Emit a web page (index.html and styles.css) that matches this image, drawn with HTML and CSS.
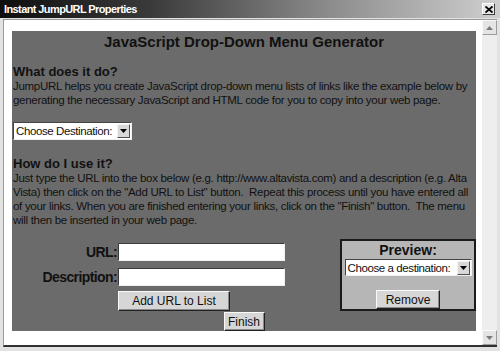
FILE: index.html
```html
<!DOCTYPE html>
<html>
<head>
<meta charset="utf-8">
<link rel="stylesheet" href="styles.css">
</head>
<body>
<div class="window">
  <div class="titlebar">
    <span class="title">Instant JumpURL Properties</span>
    <span class="close"><svg width="8" height="7" viewBox="0 0 8 7"><path d="M0.5 0.5 L7.5 6.5 M7.5 0.5 L0.5 6.5" stroke="#000" stroke-width="1.8"/></svg></span>
  </div>
  <div class="frame">
    <div class="client">
      <div class="panel">
        <h1 class="heading">JavaScript Drop-Down Menu Generator</h1>
        <h2 class="subhead">What does it do?</h2>
        <p class="text">JumpURL helps you create JavaScript drop-down menu lists of links like the example below by<br>generating the necessary JavaScript and HTML code for you to copy into your web page.</p>
        <div class="select demo-select"><span class="select-label">Choose Destination:</span><span class="select-btn"><svg width="7" height="4" viewBox="0 0 7 4"><path d="M0 0 H7 L3.5 4 Z" fill="#000"/></svg></span></div>
        <h2 class="subhead second">How do I use it?</h2>
        <p class="text">Just type the URL into the box below (e.g. http://www.altavista.com) and a description (e.g. Alta<br>Vista) then click on the "Add URL to List" button.&nbsp; Repeat this process until you have entered all<br>of your links. When you are finished entering your links, click on the "Finish" button.&nbsp; The menu<br>will then be inserted in your web page.</p>
        <div class="form-area">
          <div class="fields">
            <span class="field-label">URL:</span><span class="textbox"></span>
            <span class="field-label">Description:</span><span class="textbox"></span>
            <span></span><span class="button add-btn">Add URL to List</span>
          </div>
          <div class="preview">
            <div class="preview-title">Preview:</div>
            <div class="select preview-select"><span class="select-label">Choose a destination:</span><span class="select-btn"><svg width="7" height="4" viewBox="0 0 7 4"><path d="M0 0 H7 L3.5 4 Z" fill="#000"/></svg></span></div>
            <span class="button remove-btn">Remove</span>
          </div>
        </div>
        <div class="finish-row"><span class="button finish-btn">Finish</span></div>
      </div>
    </div>
    <div class="scrollbar">
      <span class="scroll-btn"><svg width="7" height="4" viewBox="0 0 7 4"><path d="M0 4 H7 L3.5 0 Z" fill="#7a7a7a"/></svg></span>
      <span class="scroll-track"></span>
      <span class="scroll-btn"><svg width="7" height="4" viewBox="0 0 7 4"><path d="M0 0 H7 L3.5 4 Z" fill="#7a7a7a"/></svg></span>
    </div>
  </div>
</div>
</body>
</html>
```
FILE: styles.css
```css
html, body { margin: 0; padding: 0; }
body { width: 500px; height: 351px; overflow: hidden; background: #e4e4e4; font-family: "Liberation Sans", Arial, sans-serif; }

.window { width: 500px; height: 351px; display: flex; flex-direction: column; background: #e2e2e2; overflow: hidden; }

.titlebar {
  height: 18px; flex: none;
  display: flex; align-items: center; justify-content: space-between;
  padding: 0 4px 0 4px; box-sizing: border-box;
  background: linear-gradient(to right, #0e0e0e 0%, #3a3a3a 30%, #8a8a8a 65%, #cfcfcf 100%);
}
.title { color: #fff; font-weight: bold; font-size: 11px; font-family: "Liberation Sans", Tahoma, sans-serif; letter-spacing: -0.6px; }
.close {
  width: 13px; height: 12px; box-sizing: border-box;
  display: flex; align-items: center; justify-content: center;
  background: #e6e6e6; border: 1px solid; border-color: #fff #404040 #404040 #fff;
  margin-right: 1px;
}

.frame {
  flex: 1; display: flex; min-height: 0;
  margin: 1px 3px 4px 3px;
  border-top: 1px solid #9a9a9a; border-left: 1px solid #9a9a9a;
  border-bottom: 2px solid #303030;
  background: #fff;
}
.client { flex: 1; min-width: 0; overflow: hidden; padding: 11px 6px 0 8px; }
.scrollbar { width: 15px; flex: none; display: flex; flex-direction: column; background: #eeeeee; }
.scroll-btn {
  height: 15px; box-sizing: border-box; display: flex; align-items: center; justify-content: center;
  background: #e4e4e4; border: 1px solid; border-color: #fafafa #9c9c9c #9c9c9c #fafafa;
}
.scroll-track { flex: 1; }

.panel {
  background: #6b6b6b; height: 300px; box-sizing: border-box;
  padding: 2px 0 0 1px; color: #111;
}
.heading { margin: 0; text-align: center; font-size: 15px; line-height: 18px; font-weight: bold; padding-right: 1px; }
.subhead { margin: 13px 0 0; font-size: 13px; line-height: 15px; font-weight: bold; }
.subhead.second { margin-top: 16px; }
.text { margin: 0; font-size: 11.5px; line-height: 14px; white-space: nowrap; letter-spacing: -0.3px; }

.select {
  display: flex; align-items: center; box-sizing: border-box; background: #fff;
  border: 1px solid; border-color: #444 #f0f0f0 #f0f0f0 #444;
  font-size: 11.5px;
}
.select-label { flex: 1; padding-left: 2px; white-space: nowrap; overflow: hidden; letter-spacing: -0.4px; }
.select-btn {
  width: 13px; height: 14px; box-sizing: border-box; margin-right: 1px; flex: none;
  display: flex; align-items: center; justify-content: center;
  background: #d8d8d8; border: 1px solid; border-color: #f4f4f4 #505050 #505050 #f4f4f4;
}
.demo-select { width: 119px; height: 18px; margin-top: 15px; }

.form-area { display: flex; margin-top: 12px; }
.fields {
  display: grid; grid-template-columns: 105px 167px; row-gap: 6px; align-items: center;
  padding-top: 4px;
}
.field-label { text-align: right; font-weight: bold; font-size: 14px; padding-right: 1px; letter-spacing: -0.6px; }
.textbox {
  height: 18px; box-sizing: border-box; background: #fff;
  border: 1px solid; border-color: #3a3a3a #f0f0f0 #f0f0f0 #3a3a3a;
}

.button {
  display: inline-flex; align-items: center; justify-content: center; box-sizing: border-box;
  background: #d6d6d6; font-size: 12px; color: #111;
  border: 1px solid; border-color: #fafafa #222 #222 #fafafa;
  box-shadow: inset -1px -1px 0 #8a8a8a;
}
.add-btn { width: 112px; height: 20px; margin-top: -2px; }

.preview {
  margin-left: auto; width: 136px; height: 72px; box-sizing: border-box; flex: none;
  background: #b6b6b6; border: 2px solid #1a1a1a;
  display: flex; flex-direction: column; align-items: center;
}
.preview-title { font-size: 14px; font-weight: bold; line-height: 16px; margin-top: 1px; }
.preview-select { width: 127px; height: 18px; margin-top: 1px; }
.remove-btn { width: 64px; height: 20px; margin-top: 14px; font-size: 12px; }

.finish-row { display: flex; justify-content: center; margin-top: 1px; }
.finish-btn { width: 41px; height: 19px; margin-left: -1px; }
```
